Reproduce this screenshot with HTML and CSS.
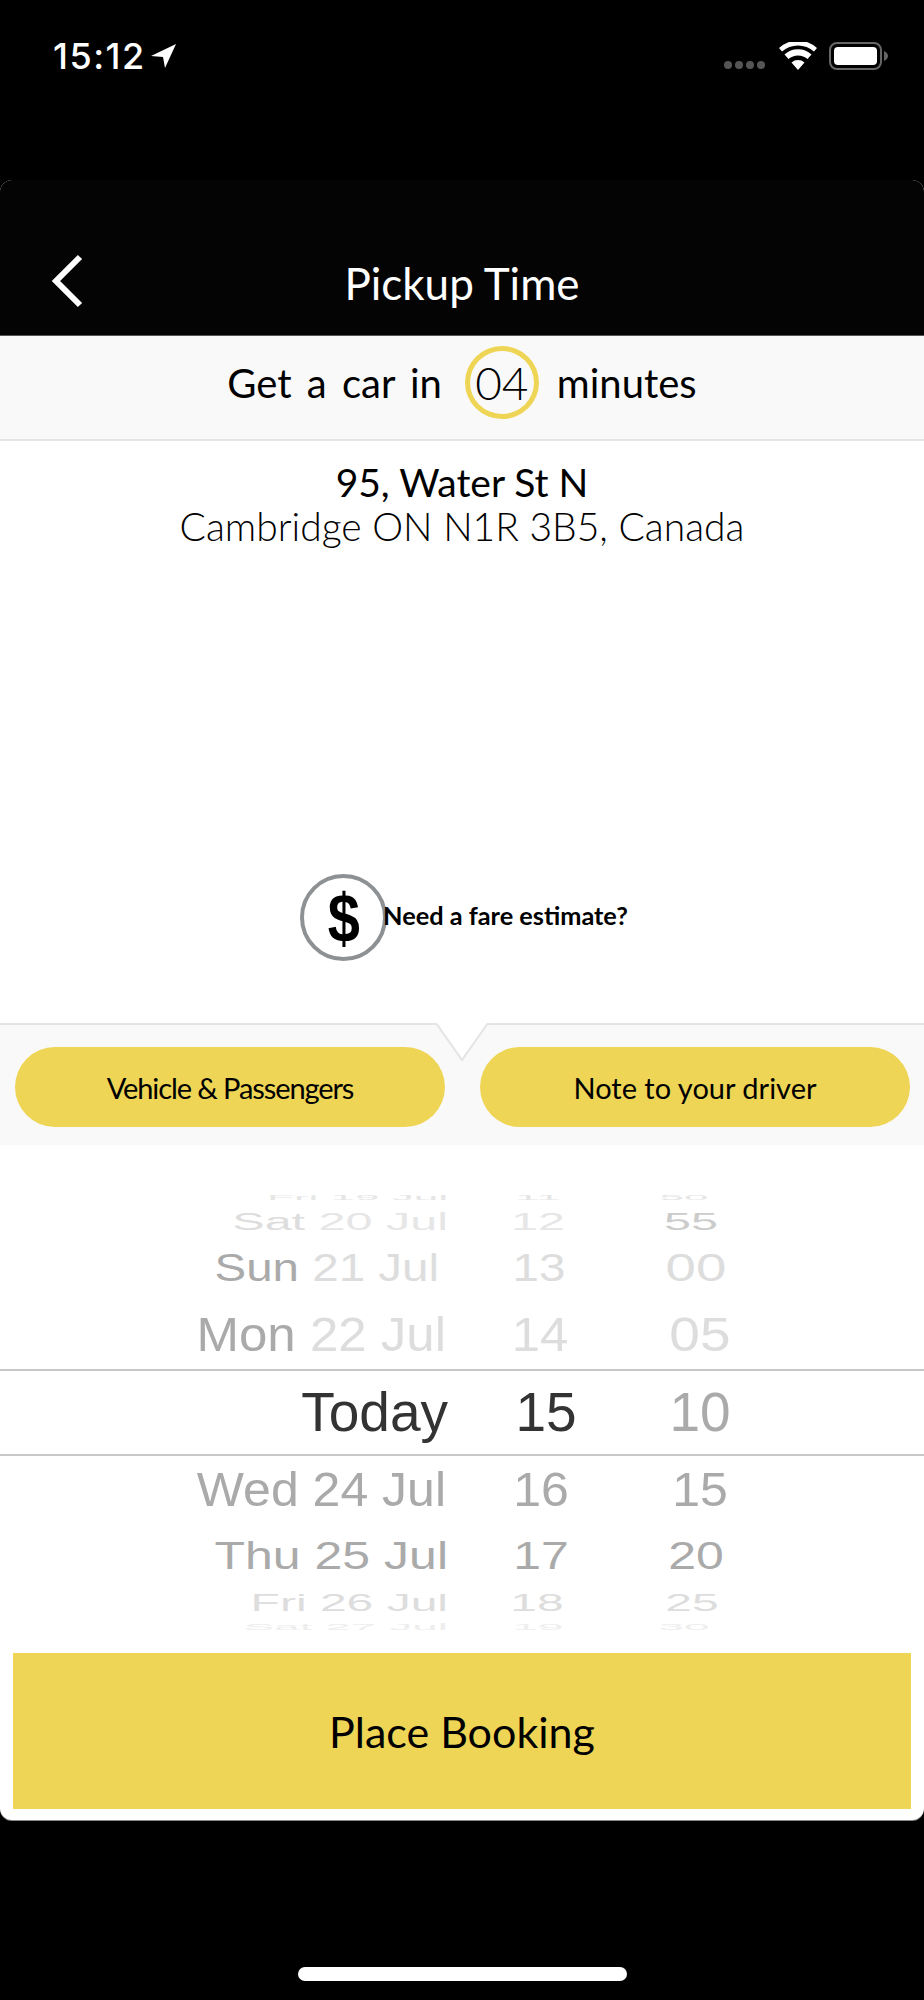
FILE: index.html
```html
<!DOCTYPE html>
<html lang="en">
<head>
<meta charset="utf-8">
<title>Pickup Time</title>
<link rel="stylesheet" href="styles.css">
</head>
<body>
<div class="phone">
  <header class="status">
    <div class="status-left">
      <span class="clock">15:12</span>
      <svg class="loc" viewBox="0 0 25 24"><path d="M25 0 L0 12 L12 13 L14 24 Z" fill="#fff"/></svg>
    </div>
    <div class="status-right">
      <span class="signal"><i></i><i></i><i></i><i></i></span>
      <svg class="wifi" viewBox="0 0 38 28"><path d="M19 28 L12.5 20.5 A10 10 0 0 1 25.5 20.5 Z M9.5 17 L5.5 12.5 A20 20 0 0 1 32.5 12.5 L28.5 17 A14.500 14.500 0 0 0 9.500 17 Z M3 9.500 L0 6 A28 28 0 0 1 38 6 L35 9.500 A24 24 0 0 0 3 9.500 Z" fill="#fff"/></svg>
      <svg class="battery" viewBox="0 0 59 28"><rect x="1" y="1" width="51" height="26" rx="7" fill="none" stroke="#666" stroke-width="2"/><rect x="5" y="5" width="43" height="18" rx="4" fill="#fff"/><path d="M55 9 Q59 11 59 14 Q59 17 55 19 Z" fill="#666"/></svg>
    </div>
  </header>

  <main class="card">
    <div class="nav">
      <svg class="back" viewBox="0 0 32 54"><path d="M29 3 L5 27 L29 51" fill="none" stroke="#fff" stroke-width="6"/></svg>
      <h1 class="nav-title">Pickup Time</h1>
    </div>

    <div class="eta">
      <span>Get a car in</span>
      <span class="eta-circle">04</span>
      <span>minutes</span>
    </div>

    <section class="details">
      <div class="address">
        <div class="address-main">95, Water St N</div>
        <div class="address-sub">Cambridge ON N1R 3B5, Canada</div>
      </div>
      <div class="fare">
        <span class="fare-icon"><span class="fare-glyph">$</span></span>
        <span class="fare-text">Need a fare estimate?</span>
      </div>
    </section>

    <div class="options">
      <svg class="notch" viewBox="0 0 54 40"><path d="M0 0 H54 L27 37 Z" fill="#fff"/><path d="M1 0 L27 37 L53 0" fill="none" stroke="#e4e4e4" stroke-width="2"/></svg>
      <button class="pill pill-tight">Vehicle &amp; Passengers</button>
      <button class="pill">Note to your driver</button>
    </div>

    <div class="picker">
      <div class="row r-a"><span class="date">Fri 19 Jul</span><span class="hour">11</span><span class="min">50</span></div>
      <div class="row r-b"><span class="date"><span class="wd">Sat</span> 20 Jul</span><span class="hour">12</span><span class="min dark">55</span></div>
      <div class="row r-c"><span class="date"><span class="wd">Sun</span> 21 Jul</span><span class="hour">13</span><span class="min">00</span></div>
      <div class="row r-d"><span class="date"><span class="wd">Mon</span> 22 Jul</span><span class="hour">14</span><span class="min">05</span></div>
      <div class="row r-e"><span class="date">Today</span><span class="hour">15</span><span class="min">10</span></div>
      <div class="row r-f"><span class="date">Wed 24 Jul</span><span class="hour">16</span><span class="min">15</span></div>
      <div class="row r-g"><span class="date">Thu 25 Jul</span><span class="hour">17</span><span class="min">20</span></div>
      <div class="row r-h"><span class="date">Fri 26 Jul</span><span class="hour">18</span><span class="min">25</span></div>
      <div class="row r-i"><span class="date">Sat 27 Jul</span><span class="hour">19</span><span class="min">30</span></div>
    </div>

    <div class="cta-wrap">
      <button class="cta">Place Booking</button>
    </div>
  </main>

  <footer class="home"><span class="home-bar"></span></footer>
</div>
</body>
</html>
```
FILE: styles.css
```css
* { box-sizing: border-box; }
html, body { margin: 0; padding: 0; background: #000; }
body { font-family: "Lato", "Liberation Sans", sans-serif; color: #000; }
.phone { width: 924px; height: 2000px; display: flex; flex-direction: column; background: #000; }

/* status bar */
.status { height: 180px; flex: none; display: flex; justify-content: space-between; align-items: flex-start; padding: 41px 36px 0 53px; }
.status-left { display: flex; align-items: center; gap: 5px; }
.clock { font-family: "Inter", sans-serif; font-size: 36px; font-weight: 500; line-height: 30px; color: #fff; letter-spacing: 1.5px; }
.loc { width: 25px; height: 24px; display: block; }
.status-right { display: flex; align-items: flex-end; height: 29px; }
.signal { display: flex; gap: 3px; margin-right: 14px; margin-bottom: 1px; }
.signal i { width: 8px; height: 8px; border-radius: 50%; background: #555; display: block; }
.wifi { width: 38px; height: 28px; display: block; margin-right: 12px; }
.battery { width: 59px; height: 28px; display: block; }

/* card */
.card { height: 1640px; flex: none; display: flex; flex-direction: column; background: #fff; border-radius: 12px; overflow: hidden; box-shadow: 0 1px 0 #888; }
.nav { height: 156px; flex: none; background: #040404; display: flex; align-items: flex-end; justify-content: center; padding-bottom: 27px; position: relative; border-bottom: 1px solid #555; }
.back { position: absolute; left: 51px; top: 74px; width: 32px; height: 54px; }
.nav-title { margin: 0; font-size: 44px; font-weight: 400; line-height: 50px; color: #fff; }

.eta { height: 105px; flex: none; background: #f9f9f9; border-bottom: 2px solid #e5e5e5; display: flex; align-items: center; justify-content: center; gap: 18px; font-size: 40px; word-spacing: 5px; color: #000; padding-bottom: 10px; }
.eta-circle { width: 74px; height: 73px; margin-left: 5px; border-radius: 50%; border: 5px solid #eed555; display: flex; align-items: center; justify-content: center; font-weight: 300; font-size: 46px; }

.details { height: 582px; flex: none; display: flex; flex-direction: column; align-items: center; padding-top: 19px; }
.address { text-align: center; }
.address-main { font-size: 39px; line-height: 44px; }
.address-sub { font-size: 39px; line-height: 44px; font-weight: 300; }
.fare { display: flex; align-items: center; margin-top: 326px; margin-left: 4px; }
.fare-icon { width: 87px; height: 87px; border-radius: 50%; border: 4px solid #8e9193; background: #fff; display: flex; align-items: center; justify-content: center; }
.fare-glyph { font-family: "Liberation Sans", sans-serif; font-weight: 700; font-size: 68px; line-height: 1; transform: scaleX(.85); }
.fare-text { font-size: 25.3px; font-weight: 700; margin-left: -4px; margin-bottom: 6px; position: relative; }

.options { height: 122px; flex: none; background: #f9f9f9; border-top: 2px solid #e4e4e4; display: flex; justify-content: space-between; padding: 22px 14px 0 15px; position: relative; }
.notch { position: absolute; left: 435px; top: -2px; width: 54px; height: 40px; }
.pill { width: 430px; height: 80px; border: 0; border-radius: 40px; background: #eed555; font-family: inherit; font-size: 29px; color: #000; position: relative; padding: 0; }
.pill-tight { letter-spacing: -1.1px; }

/* wheel picker */
.picker { height: 508px; flex: none; padding-top: 45px; overflow: hidden; font-family: "Liberation Sans", sans-serif; color: #ddd; }
.row { display: grid; grid-template-columns: 448px 184px 122px; grid-template-rows: minmax(0, 1fr); align-items: center; white-space: nowrap; height: var(--h); font-size: var(--fs); line-height: 1; }
.date { text-align: right; transform-origin: right center; transform: scale(1, var(--sy)); translate: var(--dx, 0) 0; }
.hour { text-align: center; transform: scale(1, var(--sy)); translate: var(--hx) 0; }
.min { text-align: center; transform: scale(var(--msx, 1), var(--sy)); translate: var(--mx) 0; }
.wd { color: #aaa; }
.dark { color: #ccc; }
.r-a { --h: 16px; --fs: 44px; --sy: .16; --hx: -2px; --mx: -9px; color: #e6e6e6; }
.r-b { --h: 30px; --fs: 48.500px; --sy: .5; --hx: -2px; --mx: -2px; color: #e6e6e6; }
.r-b .wd { color: #ddd; }
.r-c { --h: 64px; --fs: 47.500px; --sy: .8; --dx: -9px; --hx: -1px; --mx: 3px; --msx: 1.15; }
.r-d { --h: 69px; --fs: 51px; --sy: .94; --dx: -2px; --hx: 0px; --mx: 7px; --msx: 1.08; }
.r-e { --h: 87px; --fs: 55px; --sy: 1; --hx: 6px; --mx: 7px; color: #333; border-top: 2px solid #c8c8c8; border-bottom: 2px solid #c8c8c8; }
.r-e .min { color: #aaa; }
.r-f { --h: 68px; --fs: 50px; --sy: .97; --dx: -2px; --hx: 1px; --mx: 7px; color: #aaa; }
.r-g { --h: 64px; --fs: 50px; --sy: .78; --hx: 1px; --mx: 3px; color: #aaa; }
.r-h { --h: 30px; --fs: 48px; --sy: .5; --hx: -3px; --mx: -1px; }
.r-i { --h: 18px; --fs: 46px; --sy: .2; --hx: -2px; --mx: -9px; color: #eee; }

.cta-wrap { flex: 1; padding: 0 13px; }
.cta { width: 898px; height: 156px; border: 0; background: #eed555; font-family: inherit; font-size: 43px; color: #000; padding: 0; }

.home { flex: 1; display: flex; justify-content: center; padding-top: 147px; }
.home-bar { width: 329px; height: 14px; border-radius: 7px; background: #fff; display: block; }
```
